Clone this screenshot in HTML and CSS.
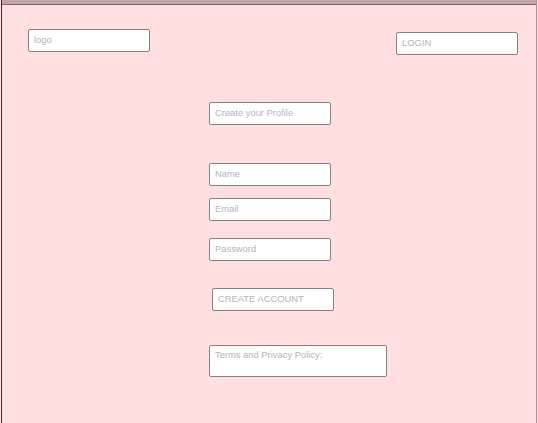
FILE: index.html
```html
<!DOCTYPE html>
<html>
<head>
<meta charset="utf-8">
<link rel="stylesheet" href="styles.css">
</head>
<body>
<div class="frame">
  <div class="topbar"></div>
  <header class="header">
    <div class="box">logo</div>
    <div class="box login">LOGIN</div>
  </header>
  <main class="form">
    <div class="box profile">Create your Profile</div>
    <div class="box name">Name</div>
    <div class="box email">Email</div>
    <div class="box password">Password</div>
    <div class="box create">CREATE ACCOUNT</div>
    <div class="box terms">Terms and Privacy Policy:</div>
  </main>
</div>
</body>
</html>
```
FILE: styles.css
```css
html, body {
  margin: 0;
  padding: 0;
  background: #ffdfe0;
}
body {
  font-family: "Liberation Sans", Arial, sans-serif;
}
.frame {
  margin-left: 1px;
  width: 536px;
  height: 423px;
  box-sizing: border-box;
  border-left: 1px solid #3d3030;
  border-right: 1px solid #a09898;
  background: #ffdfe0;
}
.topbar {
  height: 4px;
  background: #c0a4a6;
  border-bottom: 1px solid #7a6666;
}
.header {
  display: flex;
  justify-content: space-between;
  align-items: flex-start;
  padding: 24px 18px 0 26px;
}
.box {
  width: 122px;
  height: 23px;
  box-sizing: border-box;
  border: 1px solid #858080;
  border-radius: 2px;
  background: #fff;
  padding: 0 5px;
  font-size: 9.4px;
  line-height: 20px;
  color: #b9b1bb;
  white-space: nowrap;
}
.login {
  margin-top: 3px;
}
.form {
  display: flex;
  flex-direction: column;
  align-items: flex-start;
  padding-left: 207px;
}
.profile { margin-top: 47px; }
.name { margin-top: 38px; }
.email { margin-top: 12px; }
.password { margin-top: 17px; }
.create { margin-top: 27px; margin-left: 3px; }
.terms {
  margin-top: 34px;
  width: 178px;
  height: 32px;
  line-height: 11px;
  padding-top: 3px;
}
```
